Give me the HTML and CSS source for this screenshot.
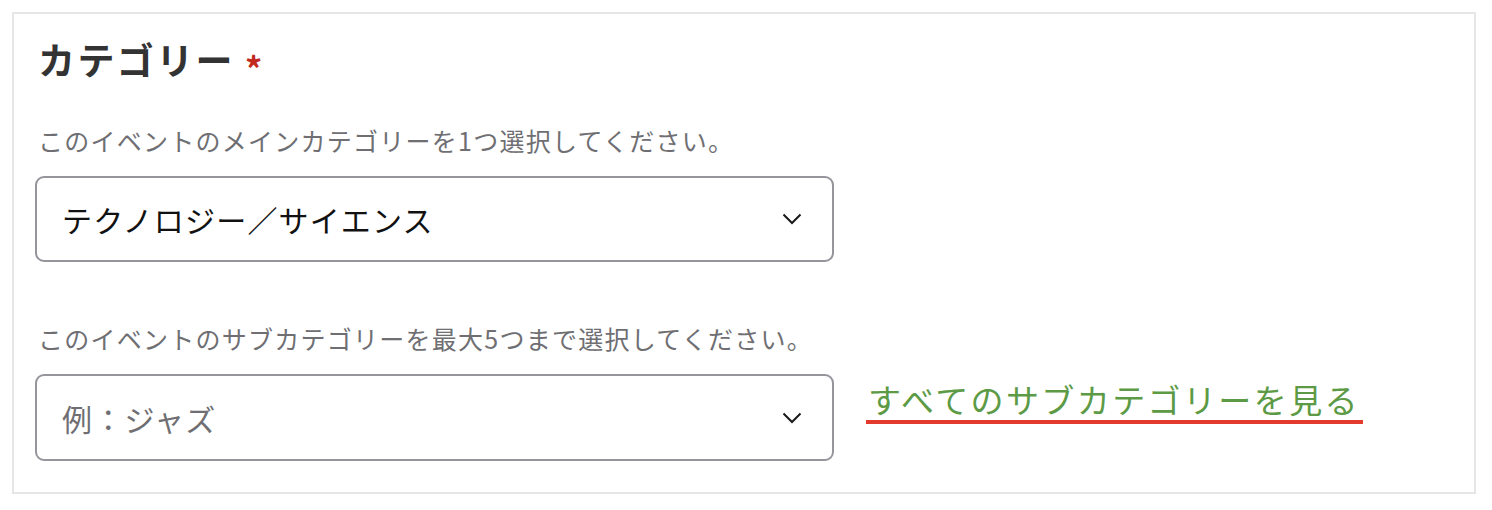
FILE: index.html
```html
<!DOCTYPE html>
<html lang="ja">
<head>
<meta charset="utf-8">
<link rel="stylesheet" href="styles.css">
</head>
<body>
<section class="card">
  <h2 class="title">カテゴリー<span class="req">*</span></h2>
  <p class="desc desc-main">このイベントのメインカテゴリーを1つ選択してください。</p>
  <div class="select select-main">
    <span class="value">テクノロジー／サイエンス</span>
    <svg class="chev" width="20" height="12" viewBox="0 0 20 12"><path d="M1.5 1.5 L10 10 L18.5 1.5" fill="none" stroke="#1a1a1a" stroke-width="2"/></svg>
  </div>
  <p class="desc desc-sub">このイベントのサブカテゴリーを最大5つまで選択してください。</p>
  <div class="row">
    <div class="select select-sub">
      <span class="placeholder">例：ジャズ</span>
      <svg class="chev" width="20" height="12" viewBox="0 0 20 12"><path d="M1.5 1.5 L10 10 L18.5 1.5" fill="none" stroke="#1a1a1a" stroke-width="2"/></svg>
    </div>
    <a class="link" href="#">すべてのサブカテゴリーを見る</a>
  </div>
</section>
</body>
</html>
```
FILE: styles.css
```css
html, body {
  margin: 0;
  padding: 0;
  background: #ffffff;
}
body {
  font-family: "Noto Sans CJK JP", "Noto Sans", sans-serif;
  padding: 12px;
}
.card {
  border: 2px solid #e6e6e6;
  width: 1464px;
  height: 482px;
  padding: 0 0 0 21px;
  box-sizing: border-box;
}
.title {
  margin: 23px 0 0 3px;
  font-size: 37px;
  font-weight: 700;
  color: #333333;
  line-height: 44px;
  height: 44px;
  letter-spacing: 2.4px;
}
.req {
  color: #c32a1e;
  font-size: 34px;
  line-height: 0;
  margin-left: 10px;
  vertical-align: -7px;
}
.desc {
  margin: 0 0 0 3px;
  font-size: 25px;
  color: #6f6f73;
  line-height: 36px;
  letter-spacing: 1.25px;
}
.desc-main {
  margin-top: 41px;
}
.desc-sub {
  margin-top: 58px;
}
.select {
  width: 799px;
  border: 2px solid #96959c;
  border-radius: 9px;
  display: flex;
  align-items: center;
  justify-content: space-between;
  padding: 0 30px 0 25px;
  box-sizing: border-box;
  font-size: 30px;
  flex: none;
  letter-spacing: 1.2px;
}
.select-main {
  margin-top: 18px;
  height: 86px;
}
.select-sub {
  margin-top: 0;
  height: 87px;
}
.value {
  color: #111111;
}
.placeholder {
  color: #6f6f73;
}
.chev {
  display: block;
}
.row {
  display: flex;
  align-items: flex-start;
  margin-top: 18px;
}
.link {
  margin: 5px 0 0 32px;
  font-size: 33px;
  color: #5c9a45;
  text-decoration: none;
  border-bottom: 4px solid #e23a2c;
  line-height: 40px;
  padding: 0 3px 1px 2px;
  letter-spacing: 2.4px;
}
```
